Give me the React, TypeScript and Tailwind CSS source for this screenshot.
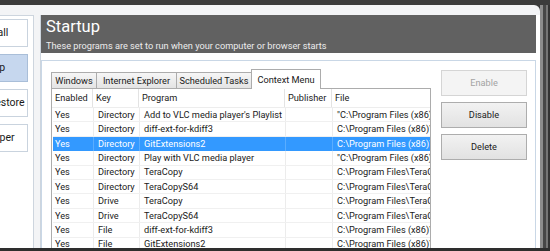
import React from 'react';

const font = { fontFamily: 'Roboto, "Liberation Sans", sans-serif' };

const sideItems = [
  { label: 'Uninstall', active: false },
  { label: 'Startup', active: true },
  { label: 'System Restore', active: false },
  { label: 'Drive Wiper', active: false },
];

const tabs = [
  { label: 'Windows', w: 'w-[46px]' },
  { label: 'Internet Explorer', w: 'w-[81px]' },
  { label: 'Scheduled Tasks', w: 'w-[76px]' },
];

// file paths are cut where the column ends
const rows = [
  ['Directory', "Add to VLC media player's Playlist", '"C:\\Program Files (x86)'],
  ['Directory', 'diff-ext-for-kdiff3', 'C:\\Program Files (x86)\\'],
  ['Directory', 'GitExtensions2', 'C:\\Program Files (x86)\\'],
  ['Directory', 'Play with VLC media player', '"C:\\Program Files (x86)'],
  ['Directory', 'TeraCopy', 'C:\\Program Files\\TeraC'],
  ['Directory', 'TeraCopyS64', 'C:\\Program Files\\TeraC'],
  ['Drive', 'TeraCopy', 'C:\\Program Files\\TeraC'],
  ['Drive', 'TeraCopyS64', 'C:\\Program Files\\TeraC'],
  ['File', 'diff-ext-for-kdiff3', 'C:\\Program Files (x86)\\'],
  ['File', 'GitExtensions2', 'C:\\Program Files (x86)\\'],
];

const cols = 'grid grid-cols-[41px_46px_146px_47px_1fr]';

export default function App() {
  return (
    <div className="w-[550px] h-[251px] overflow-hidden flex flex-col bg-[#3b3b3b] text-[9.2px] text-[#1a1a1a]" style={font}>
      {/* top window edge */}
      <div className="h-[5px] shrink-0 bg-[#3b3b3b]" />

      <div className="flex flex-1 min-h-0">
        <div className="flex-1 flex bg-[#f3f4f6] rounded-tr-[6px] pt-[10px] overflow-hidden">
          {/* sidebar */}
          <div className="w-[34px] shrink-0 bg-white border-r border-t border-[#cdd5de] flex flex-col gap-[7px] pt-[3px] overflow-hidden">
            {sideItems.map((s) => (
              <div
                key={s.label}
                className={`w-[80px] ml-[-52px] h-[28px] shrink-0 flex items-center justify-center border text-[10.5px] whitespace-nowrap ${
                  s.active ? 'bg-[#c6d7ee] border-[#a9bed8]' : 'bg-white border-[#c9d3de]'
                }`}
              >
                {s.label}
              </div>
            ))}
          </div>

          {/* main panel */}
          <div className="flex-1 ml-[6px] bg-white border-l border-[#cdd5de] flex flex-col pr-[4px]">
            <div className="h-[38px] shrink-0 bg-[#616161] px-[5px] pt-[2px] text-white leading-none">
              <div className="text-[16.5px] leading-[20px]">Startup</div>
              <div className="text-[9.2px] mt-[4px] text-[#ececec]">These programs are set to run when your computer or browser starts</div>
            </div>

            <div className="flex-1 mt-[7px] border border-b-0 border-[#c9d7e6] flex pl-[9px] pr-[8px] pt-[7px] min-h-0">
              {/* tabs + list */}
              <div className="w-[380px] flex flex-col min-h-0">
                <div className="h-[20px] flex items-end shrink-0">
                  {tabs.map((t) => (
                    <div
                      key={t.label}
                      className={`${t.w} h-[16px] border border-b-0 border-[#acacac] -mr-px bg-gradient-to-b from-[#f6f6f6] to-[#e4e4e4] flex items-center justify-center whitespace-nowrap`}
                    >
                      {t.label}
                    </div>
                  ))}
                  <div className="w-[70px] h-[20px] border border-b-0 border-[#acacac] bg-white flex items-center justify-center whitespace-nowrap relative top-[1px] z-10">
                    Context Menu
                  </div>
                </div>
                <div className="flex-1 border border-b-0 border-[#acacac] bg-white overflow-hidden">
                  <div className={`${cols} h-[19px] items-center border-b border-[#ededed]`}>
                    {['Enabled', 'Key', 'Program', 'Publisher', 'File'].map((h) => (
                      <div key={h} className="h-full flex items-center pl-[3px] border-r border-[#e3e3e3] last:border-r-0 whitespace-nowrap overflow-hidden">
                        {h}
                      </div>
                    ))}
                  </div>
                  {rows.map((r, i) => {
                    const sel = i === 2;
                    return (
                      <div
                        key={i}
                        className={`${cols} h-[14.4px] ml-[1px] ${sel ? 'bg-[#3399ff] text-white' : 'border-b border-[#f0f0f0]'}`}
                      >
                        {['Yes', r[0], r[1], '', r[2]].map((c, j) => (
                          <div
                            key={j}
                            className={`h-full flex items-center whitespace-nowrap overflow-hidden ${j === 0 ? 'pl-[2px]' : 'pl-[4px]'} ${
                              j < 4 ? (sel ? 'border-r border-[#5aadff]' : 'border-r border-[#ececec]') : ''
                            }`}
                          >
                            {c}
                          </div>
                        ))}
                      </div>
                    );
                  })}
                </div>
              </div>

              {/* action buttons */}
              <div className="w-[86px] ml-[10px] flex flex-col gap-[6px] pt-[2px]">
                <div className="h-[26px] shrink-0 border border-[#d5d5d5] bg-[#f4f4f4] text-[#a3a3a3] flex items-center justify-center">Enable</div>
                <div className="h-[26px] shrink-0 border border-[#adadad] bg-gradient-to-b from-[#f2f2f2] to-[#e2e2e2] flex items-center justify-center">Disable</div>
                <div className="h-[26px] shrink-0 border border-[#adadad] bg-gradient-to-b from-[#f2f2f2] to-[#e2e2e2] flex items-center justify-center">Delete</div>
              </div>
            </div>
          </div>
        </div>

        {/* right window frame */}
        <div className="w-[10px] shrink-0 flex">
          <div className="w-[3px] bg-[#8d8d8d]" />
          <div className="w-[3px] bg-[#474747]" />
          <div className="w-[2px] bg-[#767676]" />
          <div className="w-[2px] bg-[#333333]" />
        </div>
      </div>

      {/* bottom edge */}
      <div className="h-[3px] shrink-0 bg-[#2e2e2e]" />
    </div>
  );
}
